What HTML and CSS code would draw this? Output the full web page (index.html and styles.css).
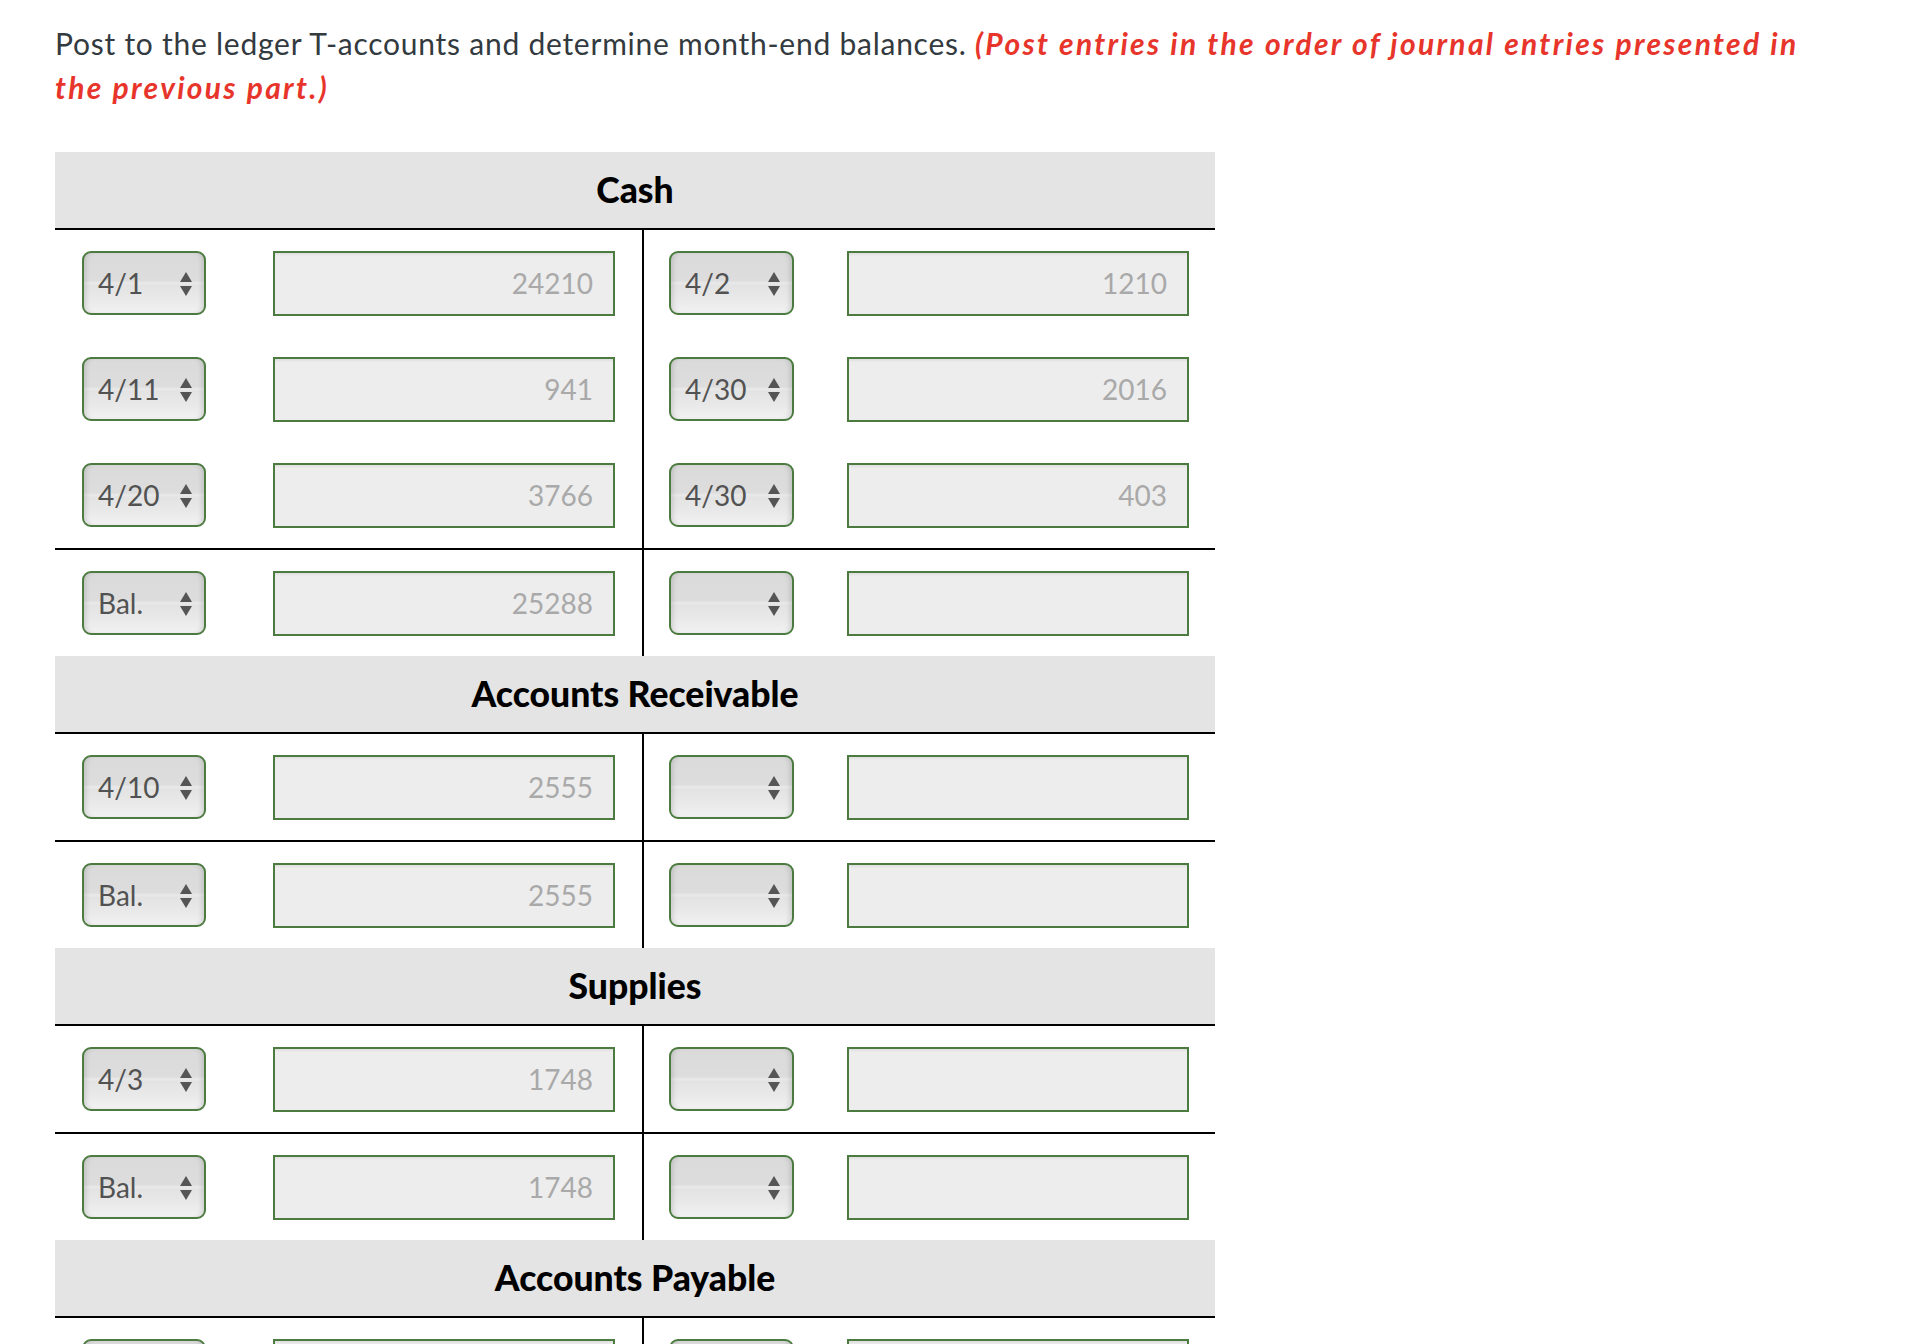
FILE: index.html
```html
<!DOCTYPE html>
<html lang="en">
<head>
<meta charset="utf-8">
<title>Ledger T-accounts</title>
<link rel="stylesheet" href="styles.css">
</head>
<body>
<p class="instr">Post to the ledger T-accounts and determine month-end balances. <strong class="note">(Post entries in the order of journal entries presented in the previous part.)</strong></p>

<div class="ledger">
  <!-- Cash -->
  <div class="acct-head">Cash</div>
  <div class="group">
    <div class="side side-l">
      <div class="row"><div class="sel"><span class="val">4/1</span><span class="arr"><i class="up"></i><i class="dn"></i></span></div><div class="amt">24210</div></div>
      <div class="row"><div class="sel"><span class="val">4/11</span><span class="arr"><i class="up"></i><i class="dn"></i></span></div><div class="amt">941</div></div>
      <div class="row"><div class="sel"><span class="val">4/20</span><span class="arr"><i class="up"></i><i class="dn"></i></span></div><div class="amt">3766</div></div>
    </div>
    <div class="side side-r">
      <div class="row"><div class="sel"><span class="val">4/2</span><span class="arr"><i class="up"></i><i class="dn"></i></span></div><div class="amt">1210</div></div>
      <div class="row"><div class="sel"><span class="val">4/30</span><span class="arr"><i class="up"></i><i class="dn"></i></span></div><div class="amt">2016</div></div>
      <div class="row"><div class="sel"><span class="val">4/30</span><span class="arr"><i class="up"></i><i class="dn"></i></span></div><div class="amt">403</div></div>
    </div>
  </div>
  <div class="group">
    <div class="side side-l">
      <div class="row"><div class="sel"><span class="val">Bal.</span><span class="arr"><i class="up"></i><i class="dn"></i></span></div><div class="amt">25288</div></div>
    </div>
    <div class="side side-r">
      <div class="row"><div class="sel"><span class="val"></span><span class="arr"><i class="up"></i><i class="dn"></i></span></div><div class="amt"></div></div>
    </div>
  </div>

  <!-- Accounts Receivable -->
  <div class="acct-head">Accounts Receivable</div>
  <div class="group">
    <div class="side side-l">
      <div class="row"><div class="sel"><span class="val">4/10</span><span class="arr"><i class="up"></i><i class="dn"></i></span></div><div class="amt">2555</div></div>
    </div>
    <div class="side side-r">
      <div class="row"><div class="sel"><span class="val"></span><span class="arr"><i class="up"></i><i class="dn"></i></span></div><div class="amt"></div></div>
    </div>
  </div>
  <div class="group">
    <div class="side side-l">
      <div class="row"><div class="sel"><span class="val">Bal.</span><span class="arr"><i class="up"></i><i class="dn"></i></span></div><div class="amt">2555</div></div>
    </div>
    <div class="side side-r">
      <div class="row"><div class="sel"><span class="val"></span><span class="arr"><i class="up"></i><i class="dn"></i></span></div><div class="amt"></div></div>
    </div>
  </div>

  <!-- Supplies -->
  <div class="acct-head">Supplies</div>
  <div class="group">
    <div class="side side-l">
      <div class="row"><div class="sel"><span class="val">4/3</span><span class="arr"><i class="up"></i><i class="dn"></i></span></div><div class="amt">1748</div></div>
    </div>
    <div class="side side-r">
      <div class="row"><div class="sel"><span class="val"></span><span class="arr"><i class="up"></i><i class="dn"></i></span></div><div class="amt"></div></div>
    </div>
  </div>
  <div class="group">
    <div class="side side-l">
      <div class="row"><div class="sel"><span class="val">Bal.</span><span class="arr"><i class="up"></i><i class="dn"></i></span></div><div class="amt">1748</div></div>
    </div>
    <div class="side side-r">
      <div class="row"><div class="sel"><span class="val"></span><span class="arr"><i class="up"></i><i class="dn"></i></span></div><div class="amt"></div></div>
    </div>
  </div>

  <!-- Accounts Payable -->
  <div class="acct-head">Accounts Payable</div>
  <div class="group">
    <div class="side side-l">
      <div class="row"><div class="sel"><span class="val"></span><span class="arr"><i class="up"></i><i class="dn"></i></span></div><div class="amt"></div></div>
    </div>
    <div class="side side-r">
      <div class="row"><div class="sel"><span class="val"></span><span class="arr"><i class="up"></i><i class="dn"></i></span></div><div class="amt"></div></div>
    </div>
  </div>
</div>
</body>
</html>
```

FILE: styles.css
```css
* { box-sizing: border-box; }

html, body {
  margin: 0;
  background: #ffffff;
}

body {
  padding: 21px 0 0 55px;
  font-family: Lato, "Open Sans", "Liberation Sans", sans-serif;
  color: #333a40;
}

.instr {
  margin: 0;
  width: 1775px;
  font-size: 30px;
  line-height: 44px;
  letter-spacing: 0.75px;
}

.note {
  color: #e8352b;
  font-style: italic;
  font-weight: 700;
  letter-spacing: 2.3px;
}

.ledger {
  width: 1160px;
  margin-top: 43px;
}

.acct-head {
  height: 78px;
  line-height: 76px;
  background: #e4e4e4;
  border-bottom: 2px solid #000;
  text-align: center;
  font-size: 35.5px;
  font-weight: 900;
  color: #000;
}

.group {
  display: grid;
  grid-template-columns: 589px 571px;
}

.group + .group {
  border-top: 2px solid #000;
}

.side-l {
  border-right: 2px solid #000;
}

.row {
  height: 106px;
  display: flex;
  align-items: center;
}

.side-l .row {
  padding-left: 27px;
  gap: 67px;
}

.side-r .row {
  padding-left: 25px;
  gap: 53px;
}

.sel {
  width: 124px;
  height: 64px;
  border: 2px solid #4b7b3f;
  border-radius: 9px;
  display: flex;
  align-items: center;
  justify-content: space-between;
  padding: 0 12px 0 14px;
  background: linear-gradient(to bottom, #dadada 0%, #dddddd 46%, #e9e9e9 50%, #e3e3e3 54%, #eaeaea 80%, #f2f2f2 100%);
  box-shadow: inset 5px 0 5px -3px rgba(0, 0, 0, 0.13), inset -5px 0 5px -3px rgba(0, 0, 0, 0.13);
  font-size: 28px;
  color: #525252;
}

.side-r .sel {
  width: 125px;
}

.arr {
  display: flex;
  flex-direction: column;
  align-items: center;
  gap: 4px;
  margin-top: 2px;
}

.arr i {
  display: block;
  width: 0;
  height: 0;
  border-left: 6.5px solid transparent;
  border-right: 6.5px solid transparent;
}

.arr .up {
  border-bottom: 10px solid #555;
}

.arr .dn {
  border-top: 10px solid #555;
}

.amt {
  width: 342px;
  height: 65px;
  border: 2px solid #4b7b3f;
  background: #ededed;
  box-shadow: inset 0 3px 2px -1px rgba(0, 0, 0, 0.05);
  text-align: right;
  padding-right: 20px;
  font-size: 28px;
  line-height: 61px;
  color: #a9a9a9;
}
```
